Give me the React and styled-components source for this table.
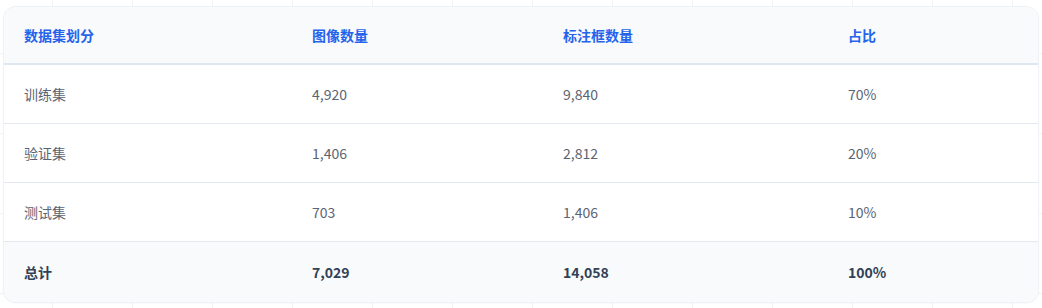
import styled, { createGlobalStyle } from "styled-components";

const GlobalStyle = createGlobalStyle`
  html, body {
    margin: 0;
    padding: 0;
  }
  body {
    width: 1042px;
    height: 308px;
    overflow: hidden;
    font-family: "Noto Sans CJK SC", "Noto Sans", sans-serif;
    background-color: #ffffff;
    background-image:
      linear-gradient(to right, #f1f3f6 1px, transparent 1px),
      linear-gradient(to bottom, #f1f3f6 1px, transparent 1px);
    background-size: 80px 80px;
    background-position: 52px 53px;
  }
`;

const Page = styled.div`
  padding: 7px 4px 6px 4px;
`;

const Card = styled.div`
  background: #ffffff;
  border-radius: 12px;
  overflow: hidden;
  box-shadow: 0 0 0 1px #eef1f5, 0 1px 3px rgba(15, 23, 42, 0.05);
`;

const Table = styled.table`
  width: 100%;
  border-collapse: collapse;
  table-layout: fixed;
  font-size: 14px;
`;

const Col = styled.col`
  width: ${(p) => p.$w || "auto"};
`;

const Head = styled.thead`
  background: #f8fafc;
`;

const HeadCell = styled.th`
  text-align: left;
  font-weight: 700;
  color: #2563eb;
  height: 56px;
  padding: 0 20px;
  border-bottom: 2px solid #dfe7f2;
`;

const Row = styled.tr`
  background: ${(p) => (p.$total ? "#f8fafc" : "#ffffff")};
  & + & {
    border-top: 1px solid #e4e9ef;
  }
`;

const Cell = styled.td`
  height: ${(p) => (p.$total ? "60px" : "58px")};
  padding: 0 20px;
  color: ${(p) => (p.$total ? "#334155" : "#5b6472")};
  font-weight: ${(p) => (p.$total ? 700 : 400)};
`;

const columns = [
  { title: "数据集划分", width: "288px" },
  { title: "图像数量", width: "251px" },
  { title: "标注框数量", width: "285px" },
  { title: "占比" },
];

const rows = [
  ["训练集", "4,920", "9,840", "70%"],
  ["验证集", "1,406", "2,812", "20%"],
  ["测试集", "703", "1,406", "10%"],
];

const total = ["总计", "7,029", "14,058", "100%"];

export default function App() {
  return (
    <>
      <GlobalStyle />
      <Page>
        <Card>
          <Table>
            <colgroup>
              {columns.map((c) => (
                <Col key={c.title} $w={c.width} />
              ))}
            </colgroup>
            <Head>
              <tr>
                {columns.map((c) => (
                  <HeadCell key={c.title}>{c.title}</HeadCell>
                ))}
              </tr>
            </Head>
            <tbody>
              {rows.map((r) => (
                <Row key={r[0]}>
                  {r.map((v, i) => (
                    <Cell key={i}>{v}</Cell>
                  ))}
                </Row>
              ))}
              <Row $total>
                {total.map((v, i) => (
                  <Cell key={i} $total>
                    {v}
                  </Cell>
                ))}
              </Row>
            </tbody>
          </Table>
        </Card>
      </Page>
    </>
  );
}
